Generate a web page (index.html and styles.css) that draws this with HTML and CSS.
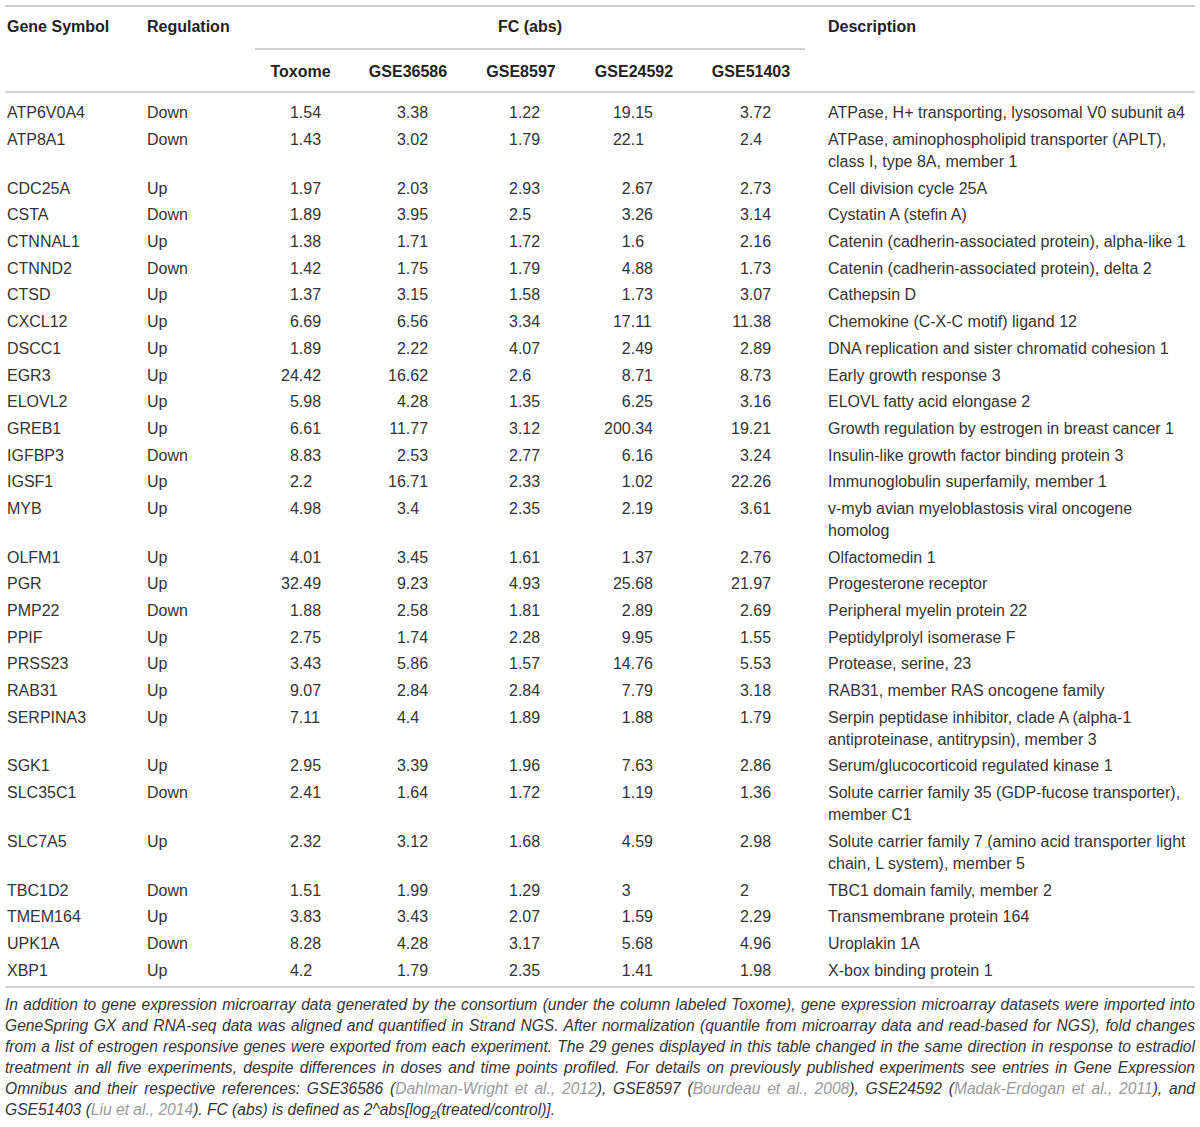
FILE: index.html
```html
<!DOCTYPE html>
<html lang="en">
<head>
    <meta charset="UTF-8">
    <meta name="viewport" content="width=device-width, initial-scale=1.0">
    <title>Estrogen responsive genes</title>
    <link rel="stylesheet" href="styles.css">
</head>
<body>
    <table class="gene-table">
        <colgroup>
            <col class="w-gene">
            <col class="w-reg">
            <col class="w-tox">
            <col class="w-g1">
            <col class="w-g2">
            <col class="w-g3">
            <col class="w-g4">
            <col class="w-desc">
        </colgroup>
        <thead>
            <tr>
                <th rowspan="2" class="first">Gene Symbol</th>
                <th rowspan="2" class="top">Regulation</th>
                <th colspan="5" class="fc"><div class="fc-label">FC (abs)</div></th>
                <th rowspan="2" class="top desc">Description</th>
            </tr>
            <tr class="sub">
                <th>Toxome</th>
                <th>GSE36586</th>
                <th>GSE8597</th>
                <th>GSE24592</th>
                <th>GSE51403</th>
            </tr>
        </thead>
        <tbody>
            <tr><td>ATP6V0A4</td><td>Down</td><td><span class="i">1</span>.54</td><td><span class="i">3</span>.38</td><td><span class="i">1</span>.22</td><td><span class="i">19</span>.15</td><td><span class="i">3</span>.72</td><td>ATPase, H+ transporting, lysosomal V0 subunit a4</td></tr>
            <tr><td>ATP8A1</td><td>Down</td><td><span class="i">1</span>.43</td><td><span class="i">3</span>.02</td><td><span class="i">1</span>.79</td><td><span class="i">22</span>.1</td><td><span class="i">2</span>.4</td><td>ATPase, aminophospholipid transporter (APLT),<br>class I, type 8A, member 1</td></tr>
            <tr><td>CDC25A</td><td>Up</td><td><span class="i">1</span>.97</td><td><span class="i">2</span>.03</td><td><span class="i">2</span>.93</td><td><span class="i">2</span>.67</td><td><span class="i">2</span>.73</td><td>Cell division cycle 25A</td></tr>
            <tr><td>CSTA</td><td>Down</td><td><span class="i">1</span>.89</td><td><span class="i">3</span>.95</td><td><span class="i">2</span>.5</td><td><span class="i">3</span>.26</td><td><span class="i">3</span>.14</td><td>Cystatin A (stefin A)</td></tr>
            <tr><td>CTNNAL1</td><td>Up</td><td><span class="i">1</span>.38</td><td><span class="i">1</span>.71</td><td><span class="i">1</span>.72</td><td><span class="i">1</span>.6</td><td><span class="i">2</span>.16</td><td>Catenin (cadherin-associated protein), alpha-like 1</td></tr>
            <tr><td>CTNND2</td><td>Down</td><td><span class="i">1</span>.42</td><td><span class="i">1</span>.75</td><td><span class="i">1</span>.79</td><td><span class="i">4</span>.88</td><td><span class="i">1</span>.73</td><td>Catenin (cadherin-associated protein), delta 2</td></tr>
            <tr><td>CTSD</td><td>Up</td><td><span class="i">1</span>.37</td><td><span class="i">3</span>.15</td><td><span class="i">1</span>.58</td><td><span class="i">1</span>.73</td><td><span class="i">3</span>.07</td><td>Cathepsin D</td></tr>
            <tr><td>CXCL12</td><td>Up</td><td><span class="i">6</span>.69</td><td><span class="i">6</span>.56</td><td><span class="i">3</span>.34</td><td><span class="i">17</span>.11</td><td><span class="i">11</span>.38</td><td>Chemokine (C-X-C motif) ligand 12</td></tr>
            <tr><td>DSCC1</td><td>Up</td><td><span class="i">1</span>.89</td><td><span class="i">2</span>.22</td><td><span class="i">4</span>.07</td><td><span class="i">2</span>.49</td><td><span class="i">2</span>.89</td><td>DNA replication and sister chromatid cohesion 1</td></tr>
            <tr><td>EGR3</td><td>Up</td><td><span class="i">24</span>.42</td><td><span class="i">16</span>.62</td><td><span class="i">2</span>.6</td><td><span class="i">8</span>.71</td><td><span class="i">8</span>.73</td><td>Early growth response 3</td></tr>
            <tr><td>ELOVL2</td><td>Up</td><td><span class="i">5</span>.98</td><td><span class="i">4</span>.28</td><td><span class="i">1</span>.35</td><td><span class="i">6</span>.25</td><td><span class="i">3</span>.16</td><td>ELOVL fatty acid elongase 2</td></tr>
            <tr><td>GREB1</td><td>Up</td><td><span class="i">6</span>.61</td><td><span class="i">11</span>.77</td><td><span class="i">3</span>.12</td><td><span class="i">200</span>.34</td><td><span class="i">19</span>.21</td><td>Growth regulation by estrogen in breast cancer 1</td></tr>
            <tr><td>IGFBP3</td><td>Down</td><td><span class="i">8</span>.83</td><td><span class="i">2</span>.53</td><td><span class="i">2</span>.77</td><td><span class="i">6</span>.16</td><td><span class="i">3</span>.24</td><td>Insulin-like growth factor binding protein 3</td></tr>
            <tr><td>IGSF1</td><td>Up</td><td><span class="i">2</span>.2</td><td><span class="i">16</span>.71</td><td><span class="i">2</span>.33</td><td><span class="i">1</span>.02</td><td><span class="i">22</span>.26</td><td>Immunoglobulin superfamily, member 1</td></tr>
            <tr><td>MYB</td><td>Up</td><td><span class="i">4</span>.98</td><td><span class="i">3</span>.4</td><td><span class="i">2</span>.35</td><td><span class="i">2</span>.19</td><td><span class="i">3</span>.61</td><td>v-myb avian myeloblastosis viral oncogene<br>homolog</td></tr>
            <tr><td>OLFM1</td><td>Up</td><td><span class="i">4</span>.01</td><td><span class="i">3</span>.45</td><td><span class="i">1</span>.61</td><td><span class="i">1</span>.37</td><td><span class="i">2</span>.76</td><td>Olfactomedin 1</td></tr>
            <tr><td>PGR</td><td>Up</td><td><span class="i">32</span>.49</td><td><span class="i">9</span>.23</td><td><span class="i">4</span>.93</td><td><span class="i">25</span>.68</td><td><span class="i">21</span>.97</td><td>Progesterone receptor</td></tr>
            <tr><td>PMP22</td><td>Down</td><td><span class="i">1</span>.88</td><td><span class="i">2</span>.58</td><td><span class="i">1</span>.81</td><td><span class="i">2</span>.89</td><td><span class="i">2</span>.69</td><td>Peripheral myelin protein 22</td></tr>
            <tr><td>PPIF</td><td>Up</td><td><span class="i">2</span>.75</td><td><span class="i">1</span>.74</td><td><span class="i">2</span>.28</td><td><span class="i">9</span>.95</td><td><span class="i">1</span>.55</td><td>Peptidylprolyl isomerase F</td></tr>
            <tr><td>PRSS23</td><td>Up</td><td><span class="i">3</span>.43</td><td><span class="i">5</span>.86</td><td><span class="i">1</span>.57</td><td><span class="i">14</span>.76</td><td><span class="i">5</span>.53</td><td>Protease, serine, 23</td></tr>
            <tr><td>RAB31</td><td>Up</td><td><span class="i">9</span>.07</td><td><span class="i">2</span>.84</td><td><span class="i">2</span>.84</td><td><span class="i">7</span>.79</td><td><span class="i">3</span>.18</td><td>RAB31, member RAS oncogene family</td></tr>
            <tr><td>SERPINA3</td><td>Up</td><td><span class="i">7</span>.11</td><td><span class="i">4</span>.4</td><td><span class="i">1</span>.89</td><td><span class="i">1</span>.88</td><td><span class="i">1</span>.79</td><td>Serpin peptidase inhibitor, clade A (alpha-1<br>antiproteinase, antitrypsin), member 3</td></tr>
            <tr><td>SGK1</td><td>Up</td><td><span class="i">2</span>.95</td><td><span class="i">3</span>.39</td><td><span class="i">1</span>.96</td><td><span class="i">7</span>.63</td><td><span class="i">2</span>.86</td><td>Serum/glucocorticoid regulated kinase 1</td></tr>
            <tr><td>SLC35C1</td><td>Down</td><td><span class="i">2</span>.41</td><td><span class="i">1</span>.64</td><td><span class="i">1</span>.72</td><td><span class="i">1</span>.19</td><td><span class="i">1</span>.36</td><td>Solute carrier family 35 (GDP-fucose transporter),<br>member C1</td></tr>
            <tr><td>SLC7A5</td><td>Up</td><td><span class="i">2</span>.32</td><td><span class="i">3</span>.12</td><td><span class="i">1</span>.68</td><td><span class="i">4</span>.59</td><td><span class="i">2</span>.98</td><td>Solute carrier family 7 (amino acid transporter light<br>chain, L system), member 5</td></tr>
            <tr><td>TBC1D2</td><td>Down</td><td><span class="i">1</span>.51</td><td><span class="i">1</span>.99</td><td><span class="i">1</span>.29</td><td><span class="i">3</span></td><td><span class="i">2</span></td><td>TBC1 domain family, member 2</td></tr>
            <tr><td>TMEM164</td><td>Up</td><td><span class="i">3</span>.83</td><td><span class="i">3</span>.43</td><td><span class="i">2</span>.07</td><td><span class="i">1</span>.59</td><td><span class="i">2</span>.29</td><td>Transmembrane protein 164</td></tr>
            <tr><td>UPK1A</td><td>Down</td><td><span class="i">8</span>.28</td><td><span class="i">4</span>.28</td><td><span class="i">3</span>.17</td><td><span class="i">5</span>.68</td><td><span class="i">4</span>.96</td><td>Uroplakin 1A</td></tr>
            <tr><td>XBP1</td><td>Up</td><td><span class="i">4</span>.2</td><td><span class="i">1</span>.79</td><td><span class="i">2</span>.35</td><td><span class="i">1</span>.41</td><td><span class="i">1</span>.98</td><td>X-box binding protein 1</td></tr>
        </tbody>
    </table>

    <div class="note">
        <span class="line">In addition to gene expression microarray data generated by the consortium (under the column labeled Toxome), gene expression microarray datasets were imported into</span>
        <span class="line">GeneSpring GX and RNA-seq data was aligned and quantified in Strand NGS. After normalization (quantile from microarray data and read-based for NGS), fold changes</span>
        <span class="line">from a list of estrogen responsive genes were exported from each experiment. The 29 genes displayed in this table changed in the same direction in response to estradiol</span>
        <span class="line">treatment in all five experiments, despite differences in doses and time points profiled. For details on previously published experiments see entries in Gene Expression</span>
        <span class="line">Omnibus and their respective references: GSE36586 (<a class="ref">Dahlman-Wright et al., 2012</a>), GSE8597 (<a class="ref">Bourdeau et al., 2008</a>), GSE24592 (<a class="ref">Madak-Erdogan et al., 2011</a>), and</span>
        <span class="line last">GSE51403 (<a class="ref">Liu et al., 2014</a>). FC (abs) is defined as 2^abs[log<sub>2</sub>(treated/control)].</span>
    </div>
</body>
</html>
```

FILE: styles.css
```css
body {
    font-family: 'Liberation Sans', Arial, sans-serif;
    font-size: 16px;
    margin: 0;
    padding: 5px 5px 0;
    background-color: #ffffff;
    color: #333;
}
.gene-table {
    width: 1190px;
    table-layout: fixed;
    border-collapse: separate;
    border-spacing: 0;
    border-top: 2px solid #d0d0d0;
    border-bottom: 2px solid #d0d0d0;
    line-height: 22px;
}
.w-gene { width: 142px; }
.w-reg { width: 103px; }
.w-tox { width: 101px; }
.w-g1 { width: 114px; }
.w-g2 { width: 112px; }
.w-g3 { width: 114px; }
.w-g4 { width: 120px; }
.w-desc { width: 384px; }

th {
    font-weight: bold;
    color: #222;
    padding: 0;
}
thead th.first,
thead th.top {
    text-align: left;
    vertical-align: top;
    padding-top: 9px;
    border-bottom: 2px solid #d0d0d0;
}
thead th.first {
    padding-left: 2px;
}
thead th.desc {
    padding-left: 17px;
}
.fc-label {
    margin: 0 6px 0 5px;
    padding: 9px 0 10px;
    text-align: center;
    border-bottom: 2px solid #d0d0d0;
}
.sub th {
    text-align: center;
    padding: 11px 0 8px;
    border-bottom: 2px solid #d0d0d0;
}

td {
    padding: 2.35px 0;
    vertical-align: top;
    white-space: nowrap;
}
tbody tr:first-child td {
    padding-top: 9.35px;
}
tbody tr:last-child td {
    padding-bottom: 4px;
}
tbody td:first-child {
    padding-left: 2px;
}
tbody td:nth-child(8) {
    padding-left: 17px;
}
.i {
    display: inline-block;
    text-align: right;
}
tbody td:nth-child(3) { padding-left: 31px; }
tbody td:nth-child(3) .i { width: 2ch; }
tbody td:nth-child(4) { padding-left: 37px; }
tbody td:nth-child(4) .i { width: 2ch; }
tbody td:nth-child(5) { padding-left: 44px; }
tbody td:nth-child(5) .i { width: 1ch; }
tbody td:nth-child(6) { padding-left: 27px; }
tbody td:nth-child(6) .i { width: 3ch; }
tbody td:nth-child(7) { padding-left: 40px; }
tbody td:nth-child(7) .i { width: 2ch; }

.note {
    width: 1190px;
    margin-top: 6px;
    font-style: italic;
    font-size: 15.6px;
    line-height: 21px;
    color: #333;
}
.note .line {
    display: block;
    white-space: nowrap;
    text-align: justify;
    text-align-last: justify;
}
.note .line.last {
    text-align-last: left;
}
.ref {
    color: #9a9a9a;
}
sub {
    font-size: 11px;
    line-height: 0;
}
```
